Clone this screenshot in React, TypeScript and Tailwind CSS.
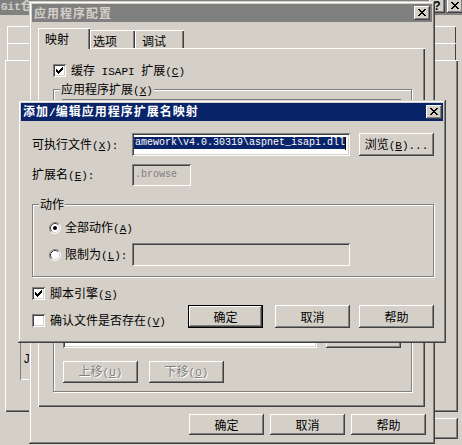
import React from "react";

const FRAME =
  "shadow-[inset_-1px_-1px_#404040,inset_1px_1px_#d4d0c8,inset_-2px_-2px_#808080,inset_2px_2px_#ffffff]";
const RAISED =
  "shadow-[inset_-1px_-1px_#404040,inset_1px_1px_#ffffff,inset_-2px_-2px_#808080,inset_2px_2px_#d4d0c8]";
const SUNKEN =
  "shadow-[inset_1px_1px_#808080,inset_-1px_-1px_#ffffff,inset_2px_2px_#404040,inset_-2px_-2px_#d4d0c8]";
const PANEL = "shadow-[inset_1px_1px_#ffffff,inset_-1px_-1px_#404040,inset_-2px_-2px_#808080]";
const TAB = "shadow-[inset_1px_1px_#ffffff,inset_-1px_0_#404040,inset_-2px_0_#808080]";
const ROW = "shadow-[inset_1px_1px_#ffffff,inset_-1px_0_#404040]";
const GRAY = "text-[#808080] [text-shadow:1px_1px_0_#ffffff]";

// ascii runs get the narrow mono face, "&" underlines the next letter
function Txt({ s }: { s: string }) {
  const parts = s.match(/[\x20-\x7e]+|[^\x20-\x7e]+/g) ?? [];
  return (
    <span className="whitespace-pre">
      {parts.map((p, i) => {
        if (!/^[\x20-\x7e]/.test(p)) return <span key={i}>{p}</span>;
        const a = p.indexOf("&");
        return (
          <span key={i} className="font-['Liberation_Mono',monospace] text-[11px] tracking-normal">
            {a < 0 ? (
              p
            ) : (
              <>
                {p.slice(0, a)}
                <span className="underline">{p[a + 1]}</span>
                {p.slice(a + 2)}
              </>
            )}
          </span>
        );
      })}
    </span>
  );
}

const XGlyph = () => (
  <svg width="8" height="7" viewBox="0 0 8 7" shapeRendering="crispEdges">
    <path
      d="M0 0h2v1H0zM6 0h2v1H6zM1 1h2v1H1zM5 1h2v1H5zM2 2h4v1H2zM3 3h2v1H3zM2 4h4v1H2zM1 5h2v1H1zM5 5h2v1H5zM0 6h2v1H0zM6 6h2v1H6z"
      fill="#000"
    />
  </svg>
);

const TitleBtn = ({ children }: { children: React.ReactNode }) => (
  <div className={`flex h-[14px] w-[16px] shrink-0 items-center justify-center bg-[#d4d0c8] pb-[1px] ${RAISED}`}>
    {children}
  </div>
);

const Check = ({ checked }: { checked?: boolean }) => (
  <div className={`flex h-[13px] w-[13px] shrink-0 items-center justify-center bg-white ${SUNKEN}`}>
    {checked && (
      <svg width="7" height="7" viewBox="0 0 7 7" shapeRendering="crispEdges">
        <path d="M0 2h1v3H0zM1 3h1v3H1zM2 4h1v3H2zM3 3h1v3H3zM4 2h1v3H4zM5 1h1v3H5zM6 0h1v3H6z" fill="#000" />
      </svg>
    )}
  </div>
);

const Radio = ({ on }: { on?: boolean }) => (
  <svg width="12" height="12" viewBox="0 0 12 12" className="shrink-0">
    <circle cx="6" cy="6" r="5" fill="#ffffff" />
    <path d="M2.11 9.89A5.5 5.5 0 0 1 9.89 2.11" stroke="#808080" fill="none" />
    <path d="M9.89 2.11A5.5 5.5 0 0 1 2.11 9.89" stroke="#ffffff" fill="none" />
    <path d="M2.82 9.18A4.5 4.5 0 0 1 9.18 2.82" stroke="#404040" fill="none" />
    <path d="M9.18 2.82A4.5 4.5 0 0 1 2.82 9.18" stroke="#d4d0c8" fill="none" />
    {on && <circle cx="6" cy="6" r="2" fill="#000" />}
  </svg>
);

const Btn = ({ children, className = "", def }: { children?: React.ReactNode; className?: string; def?: boolean }) =>
  def ? (
    <div className={`shrink-0 border border-black ${className}`}>
      <div className={`flex h-full w-full items-center justify-center ${RAISED}`}>{children}</div>
    </div>
  ) : (
    <div className={`flex shrink-0 items-center justify-center ${RAISED} ${className}`}>{children}</div>
  );

const Group = ({ label, className = "", children }: { label: string; className?: string; children?: React.ReactNode }) => (
  <div className={`relative shrink-0 border border-[#808080] shadow-[inset_1px_1px_#ffffff,1px_1px_#ffffff] ${className}`}>
    <span className="absolute left-[6px] top-[-7px] bg-[#d4d0c8] px-[1px] leading-[12px]">
      <Txt s={label} />
    </span>
    {children}
  </div>
);

function BackWindow() {
  return (
    <div className={`absolute left-[-4px] top-[-6px] flex h-[470px] w-[472px] flex-col bg-[#d4d0c8] p-[3px] ${FRAME}`}>
      <div className="flex h-[18px] shrink-0 items-center justify-between bg-[#808080] pl-[2px] pr-[2px] font-bold tracking-[1px] text-[#d4d0c8]">
        <Txt s="Git仓" />
        <div className="flex gap-[2px]">
          <TitleBtn>
            <span className="font-['Liberation_Sans',sans-serif] text-[12px] font-bold leading-[12px] tracking-normal text-black">?</span>
          </TitleBtn>
          <TitleBtn>
            <XGlyph />
          </TitleBtn>
        </div>
      </div>
      <div className="flex flex-col pl-[6px]">
        <div className={`ml-[2px] mt-[11px] h-[17px] w-[449px] ${ROW}`} />
        <div className={`ml-[2px] h-[17px] w-[449px] ${ROW}`} />
        <div className={`flex h-[352px] w-[453px] flex-col ${PANEL}`}>
          <div className="ml-[15px] mt-[240px] h-[80px] w-[80px] pl-[3px] pt-[52px] shadow-[inset_1px_1px_#808080,inset_-1px_-1px_#ffffff]">
            <span className="font-['Liberation_Mono',monospace] text-[12px]">J</span>
          </div>
        </div>
        <Btn className="ml-[378px] mt-[6px] h-[21px] w-[75px]" />
      </div>
    </div>
  );
}

function ConfigWindow() {
  return (
    <div className={`absolute left-[29px] top-[1px] flex h-[443px] w-[406px] flex-col bg-[#d4d0c8] p-[3px] ${FRAME}`}>
      <div className="flex h-[18px] shrink-0 items-center justify-between bg-[#808080] pl-[2px] pr-[2px] font-bold tracking-[1px] text-[#d4d0c8]">
        <Txt s="应用程序配置" />
        <TitleBtn>
          <XGlyph />
        </TitleBtn>
      </div>
      <div className="flex flex-col pl-[6px]">
        <div className="relative z-10 mt-[6px] flex h-[20px] items-end">
          <div className={`-mb-[1px] flex h-[21px] w-[52px] items-center bg-[#d4d0c8] pl-[7px] ${TAB}`}>映射</div>
          <div className={`flex h-[18px] w-[45px] items-center pl-[3px] pt-[4px] ${TAB}`}>选项</div>
          <div className={`flex h-[18px] w-[49px] items-center pl-[7px] pt-[4px] ${TAB}`}>调试</div>
        </div>
        <div className={`flex h-[359px] w-[387px] flex-col pl-[15px] ${PANEL}`}>
          <div className="mt-[16px] flex h-[13px] items-center gap-[5px]">
            <Check checked />
            <Txt s="缓存 ISAPI 扩展(&C)" />
          </div>
          <Group label="应用程序扩展(&X)" className="mt-[12px] flex h-[303px] w-[359px] flex-col">
            <div className={`ml-[8px] mt-[9px] h-[150px] w-[339px] bg-white ${SUNKEN}`} />
            <div className="ml-[9px] mt-[9px] flex items-end gap-[9px]">
              <div className={`h-[90px] w-[254px] bg-white ${SUNKEN}`} />
              <Btn className="h-[23px] w-[75px]">删除</Btn>
            </div>
            <div className="ml-[9px] mt-[13px] flex gap-[11px]">
              <Btn className={`h-[22px] w-[75px] ${GRAY}`}>
                <Txt s="上移(&U)" />
              </Btn>
              <Btn className={`h-[22px] w-[75px] ${GRAY}`}>
                <Txt s="下移(&O)" />
              </Btn>
            </div>
          </Group>
        </div>
        <div className="mt-[7px] flex h-[21px] gap-[6px] pl-[151px]">
          <Btn className="h-[21px] w-[75px]">确定</Btn>
          <Btn className="h-[21px] w-[75px]">取消</Btn>
          <Btn className="h-[21px] w-[75px]">帮助</Btn>
        </div>
      </div>
    </div>
  );
}

function MappingDialog() {
  return (
    <div className={`absolute left-[18px] top-[100px] flex h-[243px] w-[428px] flex-col bg-[#d4d0c8] p-[3px] ${FRAME}`}>
      <div className="flex h-[18px] shrink-0 items-center justify-between bg-[#0a246a] pl-[2px] pr-[1px] font-bold tracking-[1px] text-white">
        <Txt s="添加/编辑应用程序扩展名映射" />
        <TitleBtn>
          <XGlyph />
        </TitleBtn>
      </div>
      <div className="flex flex-col pl-[11px]">
        <div className="mt-[12px] flex h-[23px] items-center">
          <div className="w-[100px]">
            <Txt s="可执行文件(&X):" />
          </div>
          <div className={`h-[23px] w-[218px] bg-white p-[2px] ${SUNKEN}`}>
            <div className="flex h-full items-start justify-end overflow-hidden pr-[2px] pt-[2px]">
              <span className="inline-block h-[12px] shrink-0 whitespace-nowrap bg-[#0a246a] font-['Liberation_Mono',monospace] text-[10px] leading-[12px] text-white">
                {"Framework\\v4.0.30319\\aspnet_isapi.dll"}
              </span>
              <span className="h-[13px] w-[1px] shrink-0 bg-black" />
            </div>
          </div>
          <Btn className="ml-[9px] h-[23px] w-[75px]">
            <Txt s="浏览(&B)..." />
          </Btn>
        </div>
        <div className="mt-[8px] flex h-[22px] items-center">
          <div className="w-[100px]">
            <Txt s="扩展名(&E):" />
          </div>
          <div className={`flex h-[22px] w-[59px] items-center bg-[#d4d0c8] pl-[3px] ${SUNKEN}`}>
            <span className="font-['Liberation_Mono',monospace] text-[10px] text-[#808080]">.browse</span>
          </div>
        </div>
        <Group label="动作" className="mt-[18px] flex h-[73px] w-[402px] flex-col pl-[16px] pt-[17px]">
          <div className="flex h-[12px] items-center gap-[4px]">
            <Radio on />
            <Txt s="全部动作(&A)" />
          </div>
          <div className="mt-[9px] flex h-[23px] items-center">
            <div className="flex w-[83px] items-center gap-[4px]">
              <Radio />
              <Txt s="限制为(&L):" />
            </div>
            <div className={`h-[23px] w-[218px] bg-[#d4d0c8] ${SUNKEN}`} />
          </div>
        </Group>
        <div className="mt-[10px] flex h-[13px] items-center gap-[5px]">
          <Check checked />
          <Txt s="脚本引擎(&S)" />
        </div>
        <div className="mt-[5px] flex h-[23px] items-end">
          <div className="mb-[1px] flex h-[13px] w-[156px] items-center gap-[5px]">
            <Check />
            <Txt s="确认文件是否存在(&V)" />
          </div>
          <Btn def className="h-[23px] w-[75px]">
            确定
          </Btn>
          <Btn className="ml-[12px] h-[23px] w-[75px]">取消</Btn>
          <Btn className="ml-[9px] h-[23px] w-[75px]">帮助</Btn>
        </div>
      </div>
    </div>
  );
}

export default function App() {
  return (
    <div className="relative h-[445px] w-[462px] overflow-hidden bg-[#d4d0c8] font-['Noto_Sans_CJK_SC',sans-serif] text-[12px] leading-[12px] text-black">
      <BackWindow />
      <ConfigWindow />
      <MappingDialog />
    </div>
  );
}
